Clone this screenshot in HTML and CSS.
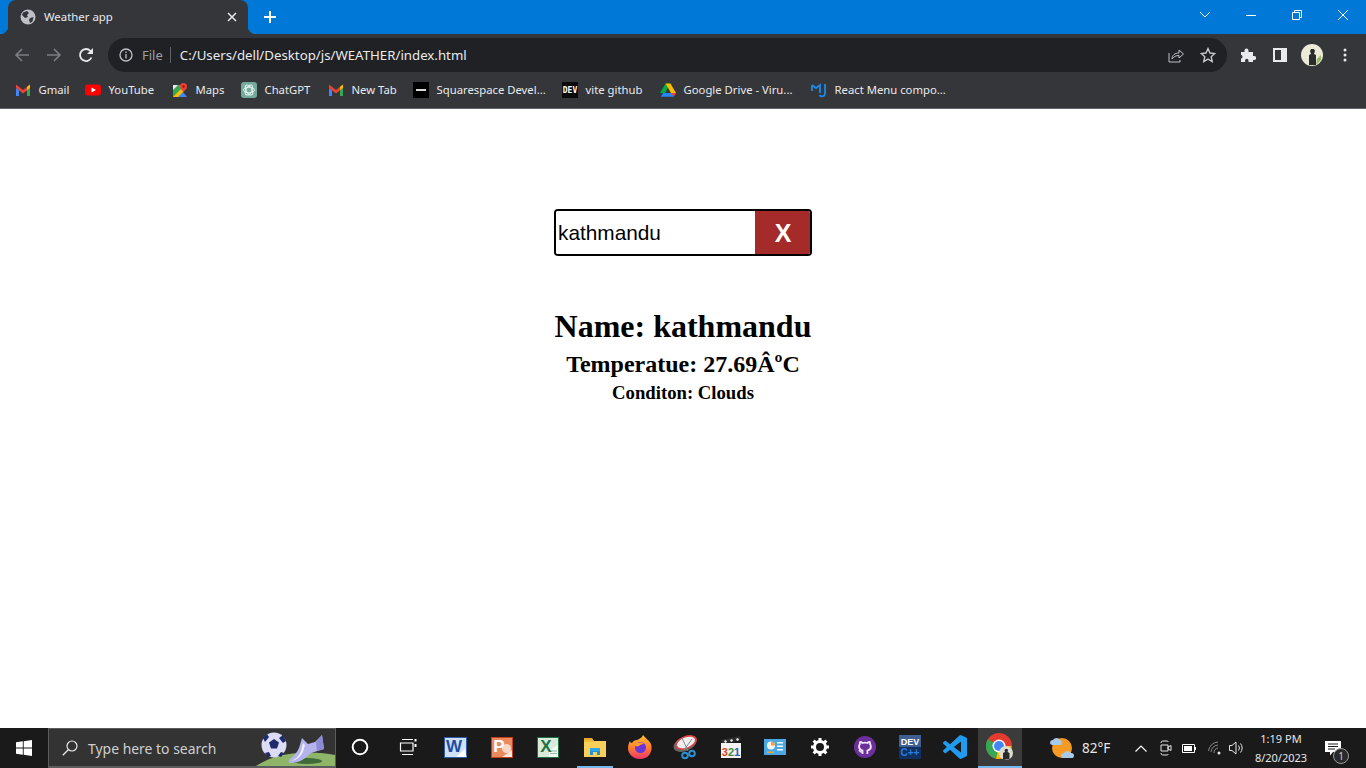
FILE: index.html
```html
<!DOCTYPE html>
<html lang="en">
<head>
    <meta charset="UTF-8">
    <meta name="viewport" content="width=device-width, initial-scale=1.0">
    <title>Weather app</title>
    <link rel="stylesheet" href="styles.css">
</head>
<body>
    <!-- browser frame -->
    <header class="browser">
        <div class="tabstrip">
            <div class="tab">
                <svg class="favicon" width="16" height="16" viewBox="0 0 16 16"><circle cx="8" cy="8" r="7.5" fill="#bdc1c6"/><path d="M3 3.5 7 2l2 2-2 2 1 2-3 1-3-3zM10 9l3.5-1-1 4.5-2.500 1.500-1-3z" fill="#35363a"/></svg>
                <span class="tab-title">Weather app</span>
                <svg class="tab-close" width="10" height="10" viewBox="0 0 10 10"><path d="M1 1l8 8M9 1l-8 8" stroke="#e8eaed" stroke-width="1.5"/></svg>
            </div>
            <svg class="new-tab" width="14" height="14" viewBox="0 0 14 14"><path d="M7 1v12M1 7h12" stroke="#fff" stroke-width="2"/></svg>
            <div class="window-btns">
                <div class="tab-search"><svg width="12" height="7" viewBox="0 0 12 7"><path d="M1 1l5 5 5-5" fill="none" stroke="#fff"/></svg></div>
                <div class="win-btn"><svg width="10" height="10" viewBox="0 0 10 10"><path d="M0 5.5h10" stroke="#fff"/></svg></div>
                <div class="win-btn"><svg width="10" height="10" viewBox="0 0 10 10"><path d="M.5 2.5h7v7h-7zM2.5 2.5v-2h7v7h-2" fill="none" stroke="#fff"/></svg></div>
                <div class="win-btn"><svg width="10" height="10" viewBox="0 0 10 10"><path d="M0 0l10 10M10 0L0 10" stroke="#fff"/></svg></div>
            </div>
        </div>

        <div class="toolbar">
            <div class="nav-btns">
                <svg width="16" height="16" viewBox="0 0 16 16"><path d="M15 8H2M8 2 2 8l6 6" fill="none" stroke="#7b7e82" stroke-width="1.6"/></svg>
                <svg width="16" height="16" viewBox="0 0 16 16"><path d="M1 8h13M8 2l6 6-6 6" fill="none" stroke="#7b7e82" stroke-width="1.6"/></svg>
                <svg width="16" height="16" viewBox="0 0 16 16"><path d="M13.5 10.5A6 6 0 1 1 12.500 4L14 5.500" fill="none" stroke="#e8eaed" stroke-width="1.8"/><path d="M15 1v6H9z" fill="#e8eaed"/></svg>
            </div>
            <div class="omnibox">
                <svg width="14" height="14" viewBox="0 0 14 14"><circle cx="7" cy="7" r="6" fill="none" stroke="#bdc1c6" stroke-width="1.3"/><path d="M7 6v4.5M7 3.500v1.500" stroke="#bdc1c6" stroke-width="1.3"/></svg>
                <span class="scheme">File</span>
                <span class="url">C:/Users/dell/Desktop/js/WEATHER/index.html</span>
                <svg class="share" width="16" height="16" viewBox="0 0 16 16"><path d="M1 6v9h11v-2" fill="none" stroke="#bdc1c6"/><path d="M4 12c0-4 3-6 7-6V3l4.500 4-4.500 4V8.500c-3 0-5 1-7 3.500z" fill="none" stroke="#bdc1c6"/></svg>
                <svg class="star" width="16" height="16" viewBox="0 0 16 16"><path d="M8 1.500l2 4.500 4.800.5-3.600 3.200 1 4.800L8 12.100l-4.200 2.400 1-4.800L1.200 6.500 6 6z" fill="none" stroke="#c4c7cb" stroke-width="1.4"/></svg>
            </div>
            <div class="toolbar-end">
                <svg width="16" height="16" viewBox="0 0 16 16"><path d="M1 5h3.500V3.500a2 2 0 0 1 4 0V5H13v4h1.200a2 2 0 0 1 0 4H13v2H8.500v-1.500a1.700 1.700 0 0 0-3.400 0V15H1v-3.500h.5a2 2 0 0 0 0-3.500H1z" fill="#e8eaed"/></svg>
                <svg width="14" height="14" viewBox="0 0 14 14"><path d="M0 0h14v14H0zM2 2v10h6V2z" fill="#e8eaed" fill-rule="evenodd"/></svg>
                <svg class="avatar" width="22" height="22" viewBox="0 0 22 22"><circle cx="11" cy="11" r="11" fill="#ecebd8"/><path d="M15 21l5-5v-5l-4 4z" fill="#9ab567"/><path d="M8 21V11l2-1-1-3 1-2h3l1 2-1 3 2 1v10z" fill="#2b2c2e"/></svg>
                <svg width="4" height="14" viewBox="0 0 4 14"><circle cx="2" cy="2" r="1.5" fill="#e8eaed"/><circle cx="2" cy="7" r="1.5" fill="#e8eaed"/><circle cx="2" cy="12" r="1.5" fill="#e8eaed"/></svg>
            </div>
        </div>

        <nav class="bookmarks">
            <a class="bookmark"><svg width="16" height="16" viewBox="0 0 16 16"><path d="M1 2.500 8 8l7-5.500V6L8 11.500 1 6z" fill="#ea4335"/><path d="M12 8.300 15 6v8h-3z" fill="#34a853"/><path d="M1 6l3 2.300V14H1z" fill="#4285f4"/><path d="M12 4.900l3-2.400V6l-3 2.300z" fill="#fbbc04"/></svg>Gmail</a>
            <a class="bookmark"><svg width="16" height="16" viewBox="0 0 16 16"><rect y="2.500" width="16" height="11" rx="3" fill="#f00"/><path d="M6.500 5.500 11 8l-4.500 2.500z" fill="#fff"/></svg>YouTube</a>
            <a class="bookmark"><svg width="16" height="16" viewBox="0 0 16 16"><path d="M1 3h10v12H1z" fill="#34a853"/><path d="M1 15 11 5v10z" fill="#fbbc04"/><path d="M6 15l5-5 4 5z" fill="#4285f4"/><path d="M1 3h5l-5 5z" fill="#e8eaed"/><circle cx="11.500" cy="4.500" r="3.500" fill="#ea4335"/><path d="M9 6.500l2.500 4 2.500-4z" fill="#ea4335"/><circle cx="11.500" cy="4.500" r="1.200" fill="#a50e0e"/></svg>Maps</a>
            <a class="bookmark"><svg width="16" height="16" viewBox="0 0 16 16"><rect width="16" height="16" rx="3" fill="#74aa9c"/><g fill="none" stroke="#e8f3f0" stroke-width=".9"><ellipse cx="8" cy="8" rx="5.500" ry="2.800"/><ellipse cx="8" cy="8" rx="5.500" ry="2.800" transform="rotate(60 8 8)"/><ellipse cx="8" cy="8" rx="5.500" ry="2.800" transform="rotate(120 8 8)"/></g></svg>ChatGPT</a>
            <a class="bookmark"><svg width="16" height="16" viewBox="0 0 16 16"><path d="M1 2.500 8 8l7-5.500V6L8 11.500 1 6z" fill="#ea4335"/><path d="M12 8.300 15 6v8h-3z" fill="#34a853"/><path d="M1 6l3 2.300V14H1z" fill="#4285f4"/><path d="M12 4.900l3-2.400V6l-3 2.300z" fill="#fbbc04"/></svg>New Tab</a>
            <a class="bookmark"><svg width="16" height="16" viewBox="0 0 16 16"><rect width="16" height="16" fill="#000"/><rect x="3" y="7" width="10" height="2" fill="#d8d8d8"/></svg>Squarespace Devel...</a>
            <a class="bookmark"><svg width="16" height="16" viewBox="0 0 16 16"><rect width="16" height="16" fill="#0a0a0a"/><text class="dev-mark" x="8" y="11" text-anchor="middle">DEV</text></svg>vite github</a>
            <a class="bookmark"><svg width="16" height="16" viewBox="0 0 16 16"><path d="M5.500 1.500h5L5 11H0z" fill="#00ac47"/><path d="M10.500 1.500 16 11h-5L5.500 1.500z" fill="#ffba00"/><path d="M3 11h13l-2.500 3.800H.8z" fill="#2684fc"/><path d="M13.500 14.800 16 11h-5z" fill="#ea4335"/></svg>Google Drive - Viru...</a>
            <a class="bookmark"><svg width="16" height="16" viewBox="0 0 16 16"><path d="M1 3v6M1 3l4 3 4-3v8M14 2v9a3 3 0 0 1-5.500 2" fill="none" stroke="#1e88e5" stroke-width="1.8"/></svg>React Menu compo...</a>
        </nav>
    </header>

    <!-- the weather page -->
    <main class="page">
        <form class="search">
            <input class="search-input" type="text" value="kathmandu">
            <button class="search-btn" type="button">X</button>
        </form>
        <h1>Name: kathmandu</h1>
        <h2>Temperatue: 27.69ÂºC</h2>
        <h3>Conditon: Clouds</h3>
    </main>

    <!-- windows taskbar -->
    <footer class="taskbar">
        <div class="start"><svg width="16" height="16" viewBox="0 0 16 16"><path d="M0 2.300 6.800 1.300v6.200H0zM7.700 1.200 16 0v7.500H7.700zM0 8.500h6.800v6.200L0 13.700zM7.700 8.500H16V16l-8.300-1.200z" fill="#fff"/></svg></div>
        <div class="task-search">
            <svg width="16" height="16" viewBox="0 0 16 16"><circle cx="10" cy="6" r="5" fill="none" stroke="#e6e6e6" stroke-width="1.2"/><path d="M6.500 9.500.8 15.300" stroke="#e6e6e6" stroke-width="1.3"/></svg>
            <span class="task-search-text">Type here to search</span>
            <svg class="search-art" width="82" height="38" viewBox="0 0 82 38">
                <path d="M3 38C15 30 30 26 45 25c15-1 27 0 37 2v11z" fill="#8fb568"/>
                <ellipse cx="54" cy="33" rx="15" ry="3" fill="#3f6b3a"/>
                <circle cx="21" cy="17" r="12.500" fill="#dcdcf5"/>
                <path d="M21 11l5 3.500-2 6h-6l-2-6zM10 10l4-4 2 3-4 5zM30 7l3 6-3 2-4-5zM12 25l4-1 2 4-3 1zM28 24l3 1-3 4-3-1z" fill="#1d2a6b"/>
                <path d="M36 32c4-4 8-7 10-12l3-10 6 6 7-2 7-7 2 14-13 4c-6 6-12 10-20 10-2 0-3-1-2-3z" fill="#b5b3ec"/>
                <path d="M38 33c5-2 8-5 10-10l2-8 2 2-2 7c-2 4-6 8-12 9z" fill="#eeeefc"/>
                <path d="M63 14l6-7 2 14-7 2z" fill="#8d8ad6"/>
            </svg>
        </div>
        <div class="task-apps">
            <div class="app"><svg width="18" height="18" viewBox="0 0 18 18"><circle cx="9" cy="9" r="7.300" fill="none" stroke="#fff" stroke-width="2"/></svg></div>
            <div class="app"><svg width="18" height="16" viewBox="0 0 18 16"><path d="M3 .5h11M3 15.500h11M1.500 4H14v8H1.500z" fill="none" stroke="#fff" stroke-width="1.2"/><path d="M16.500 0v2.500M16.500 5v3" stroke="#fff" stroke-width="2"/></svg></div>
            <div class="app"><svg width="23" height="21" viewBox="0 0 23 21"><rect x=".5" y=".5" width="22" height="20" fill="#cfe0f5" stroke="#2a5cab"/><path d="M12 20l9-8 1.500 8z" fill="#fff"/><text class="doc-letter word-letter" x="10" y="15" text-anchor="middle">W</text></svg></div>
            <div class="app"><svg width="22" height="21" viewBox="0 0 22 21"><rect x=".5" y=".5" width="21" height="20" fill="#ea8a5e" stroke="#c43e1c"/><circle cx="15.500" cy="11.500" r="4.500" fill="#f9d8c6"/><path d="M11 20l10-7v7z" fill="#fbe6da"/><text class="doc-letter ppt-letter" x="8" y="15" text-anchor="middle">P</text></svg></div>
            <div class="app"><svg width="22" height="21" viewBox="0 0 22 21"><rect x=".5" y=".5" width="21" height="20" fill="#d8ead9" stroke="#1e7145"/><path d="M12 13l9-5v12h-9z" fill="#f3f8f3"/><path d="M13 14h7M13 16.500h7" stroke="#8cc09b"/><text class="doc-letter xls-letter" x="9" y="15" text-anchor="middle">X</text></svg></div>
            <div class="app app-open"><svg width="22" height="20" viewBox="0 0 22 20"><path d="M0 1h8l2 3H0z" fill="#e7ab2b"/><path d="M0 4h22v16H0z" fill="#f8cf59"/><path d="M0 3h9l2 2H0z" fill="#f0bd3c"/><path d="M6 18v-6h10v6h-3v-3H9v3z" fill="#1f93d8"/><path d="M6 11h10v3H6z" fill="#2ca6e8"/></svg></div>
            <div class="app"><svg width="24" height="24" viewBox="0 0 24 24"><defs><linearGradient id="foxGrad" x1="0" y1="0" x2="0" y2="1"><stop offset="0" stop-color="#ffc22d"/><stop offset=".55" stop-color="#ff7a2f"/><stop offset="1" stop-color="#f0346f"/></linearGradient></defs><path d="M15 0c2 3 6 5 8 9 2 6-1 15-11 15C5 24 0 19 0 13c0-3 1-5 2-7 0 1 1 2 2 2 1-2 3-3 5-3 2-1 5-2 6-5z" fill="url(#foxGrad)"/><circle cx="12.500" cy="12.500" r="5.500" fill="#6a35d9"/><path d="M6 10c3-3 8-3 10-1-3 0-4 1-5 2-2 1-4 0-5-1z" fill="#ff9a2e"/></svg></div>
            <div class="app"><svg width="25" height="25" viewBox="0 0 25 25"><ellipse cx="12" cy="9" rx="12" ry="7" transform="rotate(-22 12 9)" fill="#666"/><ellipse cx="13" cy="7.500" rx="11.500" ry="6.500" transform="rotate(-22 13 7.500)" fill="#d94444"/><ellipse cx="13" cy="7.500" rx="9.500" ry="5" transform="rotate(-22 13 7.500)" fill="#f0f0f0"/><path d="M9 3l6 13M19 4l-8 11" stroke="#8a8a8a"/><circle cx="12" cy="20.500" r="2.800" fill="none" stroke="#2b8fd1" stroke-width="2"/><circle cx="19" cy="18.500" r="2.800" fill="none" stroke="#2b8fd1" stroke-width="2"/></svg></div>
            <div class="app"><svg width="22" height="24" viewBox="0 0 22 24"><path d="M1 5 20 1l1 4L2 9z" fill="#2e2e2e"/><path d="M4 6l2-1 1 2-2 1zM10 5l2-1 1 2-2 1zM16 4l2-1 1 2-2 1z" fill="#eee"/><rect x="1" y="8" width="20" height="15" fill="#f2f2f2"/><text class="mpc-count" x="11" y="21" text-anchor="middle"><tspan fill="#cf4a1c">3</tspan><tspan fill="#3f8f3a">2</tspan><tspan fill="#2b62b8">1</tspan></text></svg></div>
            <div class="app"><svg width="22" height="16" viewBox="0 0 22 16"><rect width="22" height="16" fill="#4aa8e4"/><circle cx="7" cy="6.500" r="4" fill="#f5f5f5"/><path d="M7 6.500v-4a4 4 0 0 1 4 4z" fill="#f2a42c"/><path d="M13 3h6v1.500h-6zM13 6.500h6V8h-6zM13 10h6v1.500h-6z" fill="#fff"/><path d="M3 12.500h7V14H3z" fill="#f2a42c"/></svg></div>
            <div class="app"><svg width="18" height="18" viewBox="0 0 18 18"><circle cx="9" cy="9" r="5.500" fill="none" stroke="#fff" stroke-width="3"/><path d="M9 0v4M9 14v4M0 9h4M14 9h4M2.600 2.600l2.900 2.900M12.500 12.500l2.900 2.900M15.400 2.600l-2.900 2.900M5.500 12.500l-2.900 2.900" stroke="#fff" stroke-width="3"/></svg></div>
            <div class="app"><svg width="22" height="22" viewBox="0 0 22 22"><circle cx="11" cy="11" r="11" fill="#6e2f9e"/><path d="M8.500 18v-3.500c-2-.5-3.500-1.800-3.500-4 0-1 .4-1.800.9-2.400-.2-.8 0-1.700.3-2.100.9 0 1.800.5 2.500 1 1.500-.4 3-.4 4.500 0 .7-.5 1.600-1 2.500-1 .3.4.5 1.300.3 2.100.5.6.9 1.400.9 2.400 0 2.200-1.500 3.500-3.500 4V18" fill="none" stroke="#efe8f5" stroke-width="1.800"/><path d="M8.500 16c-2.500.5-3-1-3.500-2" fill="none" stroke="#efe8f5" stroke-width="1.300"/></svg></div>
            <div class="app"><svg width="22" height="24" viewBox="0 0 22 24"><rect width="22" height="12" fill="#3d5f91"/><rect y="12" width="22" height="12" fill="#12305f"/><text class="dev-logo" x="11" y="10" text-anchor="middle">DEV</text><text class="dev-plus" x="11" y="21" text-anchor="middle">C++</text></svg></div>
            <div class="app"><svg width="24" height="24" viewBox="0 0 24 24"><path d="M23.150 2.587 18.210.21a1.494 1.494 0 0 0-1.705.29l-9.460 8.630-4.120-3.128a.999.999 0 0 0-1.276.057L.327 7.261A1 1 0 0 0 .326 8.740L3.899 12 .326 15.260a1 1 0 0 0 .001 1.479L1.650 17.940a.999.999 0 0 0 1.276.057l4.120-3.128 9.460 8.630a1.492 1.492 0 0 0 1.704.29l4.942-2.377A1.500 1.500 0 0 0 24 20.060V3.939a1.500 1.500 0 0 0-.85-1.352zm-5.146 14.861L10.826 12l7.178-5.448v10.896z" fill="#1f9cf0"/></svg></div>
            <div class="app app-active"><svg width="28" height="28" viewBox="0 0 28 28"><circle cx="13" cy="13" r="13" fill="#e33b2e"/><path d="M13 13 2 6a13 13 0 0 0 8 19.700z" fill="#34a853"/><path d="M13 13h12.500A13 13 0 0 1 10 25.700z" fill="#fbbc04"/><circle cx="13" cy="13" r="6.500" fill="#fff"/><circle cx="13" cy="13" r="5" fill="#4285f4"/><circle cx="20" cy="20" r="7" fill="#dcdcd0"/><path d="M17 27v-7l2-1-.5-2 1-1h2l.5 1-.5 2 2 1v6z" fill="#2a2a2c"/></svg></div>
        </div>
        <div class="weather">
            <svg width="26" height="26" viewBox="0 0 26 26"><circle cx="13" cy="13" r="10" fill="#f59a23"/><path d="M1 8a3 3 0 0 1 3-3 4 4 0 0 1 7 0 3 3 0 0 1 1 5H3a2.500 2.500 0 0 1-2-2z" fill="#a9c9e8"/><path d="M12 21a3 3 0 0 1 3-3 4 4 0 0 1 7 0 2.500 2.500 0 0 1 3 3 2 2 0 0 1-2 2H14a2 2 0 0 1-2-2z" fill="#a9c9e8"/></svg>
            <span class="weather-temp">82°F</span>
        </div>
        <div class="tray">
            <svg width="12" height="7" viewBox="0 0 12 7"><path d="M.5 6.500 6 1l5.500 5.500" fill="none" stroke="#fff" stroke-width="1.200"/></svg>
            <svg width="12" height="16" viewBox="0 0 12 16"><path d="M1 3c0-2 1-2 3-2h2c2 0 2 0 2 1M1 13c0 2 1 2 3 2h2c2 0 2 0 2-1M1 5v6h7V5z" fill="none" stroke="#e6e6e6"/><path d="M8 7l3-1.500v5L8 9z" fill="none" stroke="#e6e6e6"/></svg>
            <svg width="15" height="9" viewBox="0 0 15 9"><path d="M.5.500h12v8H.5z" fill="none" stroke="#fff"/><path d="M2 2h8v5H2z" fill="#fff"/><path d="M13.500 3v3" stroke="#fff"/></svg>
            <svg width="14" height="14" viewBox="0 0 14 14"><g fill="none" stroke="#8a8a8a"><path d="M.5 10A10 10 0 0 1 10 1"/><path d="M3 11A8 8 0 0 1 10 4"/><path d="M6 12a5 5 0 0 1 4-5"/></g><circle cx="11" cy="12" r="1.500" fill="#e6e6e6"/></svg>
            <svg width="16" height="14" viewBox="0 0 16 14"><path d="M.5 4.500H3L7 1v12L3 9.500H.5z" fill="none" stroke="#e6e6e6"/><path d="M9.500 4.500a4 4 0 0 1 0 5M11.500 2.500a7 7 0 0 1 0 9" fill="none" stroke="#e6e6e6"/></svg>
        </div>
        <div class="clock"><span>1:19 PM</span><span>8/20/2023</span></div>
        <div class="notify">
            <svg width="16" height="15" viewBox="0 0 16 15"><path d="M0 0h16v11H8l-3 3.500V11H0z" fill="#fff"/><path d="M3 3h10M3 5.500h10M3 8h7" stroke="#1a1a1a"/></svg>
            <span class="notify-badge">1</span>
        </div>
    </footer>
</body>
</html>
```

FILE: styles.css
```css
* { box-sizing: border-box; }
html, body { margin: 0; height: 100%; }
body {
    display: flex;
    flex-direction: column;
    height: 768px;
    overflow: hidden;
    background: #fff;
    font-family: "Noto Sans", sans-serif;
}
svg { display: block; flex: none; }

/* browser frame */
.browser { background: #35363a; color: #e8eaed; }
.tabstrip {
    display: flex;
    align-items: flex-end;
    height: 34px;
    padding-left: 8px;
    background: #0078d7;
}
.tab {
    position: relative;
    display: flex;
    align-items: center;
    width: 240px;
    height: 34px;
    padding: 0 11px 0 12px;
    background: #35363a;
    border-radius: 8px 8px 0 0;
}
.tab::before, .tab::after {
    content: "";
    position: absolute;
    bottom: 0;
    width: 8px;
    height: 8px;
}
.tab::before { left: -8px; background: radial-gradient(circle at 0 0, transparent 8px, #35363a 8.5px); }
.tab::after { right: -8px; background: radial-gradient(circle at 100% 0, transparent 8px, #35363a 8.5px); }
.tab-title { margin-left: 8px; padding-bottom: 2px; font-size: 11.4px; flex: 1; }
.new-tab { margin: 0 0 10px 15px; }
.window-btns { display: flex; margin-left: auto; align-self: flex-start; }
.tab-search { display: flex; align-items: center; justify-content: center; width: 46px; height: 28px; }
.win-btn { display: flex; align-items: center; justify-content: center; width: 46px; height: 29px; }

.toolbar { display: flex; align-items: center; height: 40px; padding-top: 2px; }
.nav-btns { display: flex; gap: 16px; padding-left: 14px; width: 108px; }
.omnibox {
    display: flex;
    align-items: center;
    width: 1119px;
    height: 34px;
    padding: 0 11px;
    background: #202124;
    border-radius: 17px;
}
.scheme {
    margin-left: 9px;
    padding-right: 7px;
    font-size: 13px;
    line-height: 16px;
    color: #9aa0a6;
    border-right: 1px solid #5f6368;
}
.url { margin-left: 9px; font-size: 13.25px; flex: 1; }
.star { margin-left: 16px; }
.toolbar-end { display: flex; align-items: center; margin-left: 13px; }
.toolbar-end svg:nth-child(2) { margin-left: 17px; }
.toolbar-end .avatar { margin-left: 14px; }
.toolbar-end svg:nth-child(4) { margin-left: 20px; }

.bookmarks {
    display: grid;
    grid-template-columns: 70px 87px 69px 87px 85px 149px 98px 151px 1fr;
    align-items: center;
    height: 35px;
    padding: 0 0 3px 15px;
    border-bottom: 1px solid #5f6368;
}
.bookmark { display: flex; align-items: center; gap: 7.5px; font-size: 11.3px; white-space: nowrap; }
.dev-mark { font: bold 8px "DejaVu Sans Mono", monospace; fill: #fff; }

/* weather page */
.page {
    flex: 1;
    display: flex;
    flex-direction: column;
    align-items: center;
    padding-top: 100px;
    color: #000;
    font-family: "Liberation Serif", "Times New Roman", serif;
}
.search {
    display: flex;
    width: 258px;
    height: 47px;
    border: 2px solid #000;
    border-radius: 4px;
    overflow: hidden;
}
.search-input {
    width: 199px;
    padding: 1px 2px 0;
    border: none;
    outline: none;
    font: 20.8px "Liberation Sans", Arial, sans-serif;
    color: #000;
}
.search-btn {
    flex: 1;
    border: none;
    padding: 1px 0 0 1px;
    background: brown;
    color: #fff;
    font: bold 25px "Liberation Sans", Arial, sans-serif;
}
h1 { margin: 52px 0 0; font-size: 32px; line-height: 37px; }
h2 { margin: 6px 0 0; font-size: 24px; line-height: 27px; }
h3 { margin: 4px 0 0; font-size: 18.72px; line-height: 22px; }

/* taskbar */
.taskbar { display: flex; align-items: center; height: 40px; background: #1a1a1a; color: #fff; }
.start { display: flex; align-items: center; justify-content: center; width: 48px; }
.task-search {
    position: relative;
    display: flex;
    align-items: center;
    width: 288px;
    height: 40px;
    padding-left: 13px;
    background: #333;
    border: 1px solid #5c5c5c;
    border-bottom-width: 2px;
}
.task-search-text { margin-left: 10px; padding-top: 1px; font-size: 13.95px; color: #cfcfcf; }
.search-art { position: absolute; right: 0; bottom: 0; }
.task-apps {
    display: grid;
    grid-template-columns: 46.5px 48px 47.5px 46px 46.5px 46px 45.5px 45.5px 44.5px 44.5px 45px 45px 45px 45px 44.5px;
    margin-left: 1px;
}
.app {
    position: relative;
    display: flex;
    align-items: center;
    justify-content: center;
    height: 40px;
    padding-bottom: 2px;
}
.app-open::after {
    content: "";
    position: absolute;
    left: 5px;
    right: 5px;
    bottom: 0;
    height: 2px;
    background: #76b9ed;
}
.app-active { background: #3b3b3b; border-bottom: 2px solid #76b9ed; padding-bottom: 0; }
.doc-letter { font: bold 17px "Liberation Sans", sans-serif; }
.word-letter { fill: #1f4e9e; }
.ppt-letter { fill: #fff; }
.xls-letter { fill: #1e7145; }
.mpc-count { font: bold 11px "Liberation Sans", sans-serif; }
.dev-logo { font: bold 9px "Liberation Sans", sans-serif; fill: #fff; }
.dev-plus { font: bold 10px "Liberation Sans", sans-serif; fill: #2b7de0; }

.weather { display: flex; align-items: center; margin-left: 27px; }
.weather-temp { width: 30px; margin-left: 7px; font-size: 13.5px; color: #e6e6e6; }
.tray { display: flex; align-items: center; margin-left: 23px; }
.tray svg:nth-child(2) { margin-left: 13px; }
.tray svg:nth-child(3) { margin-left: 10px; }
.tray svg:nth-child(4) { margin-left: 11px; }
.tray svg:nth-child(5) { margin-left: 7px; }
.clock {
    display: flex;
    flex-direction: column;
    align-items: center;
    width: 60px;
    margin-left: 6px;
    font-size: 11px;
    line-height: 19px;
    color: #e6e6e6;
}
.notify { position: relative; margin-left: 14px; }
.notify-badge {
    position: absolute;
    left: 8px;
    top: 7px;
    width: 16px;
    height: 16px;
    border: 1px solid #9a9a9a;
    border-radius: 50%;
    background: #2a2a2a;
    font-size: 10px;
    line-height: 14px;
    text-align: center;
    color: #ccc;
}
```
